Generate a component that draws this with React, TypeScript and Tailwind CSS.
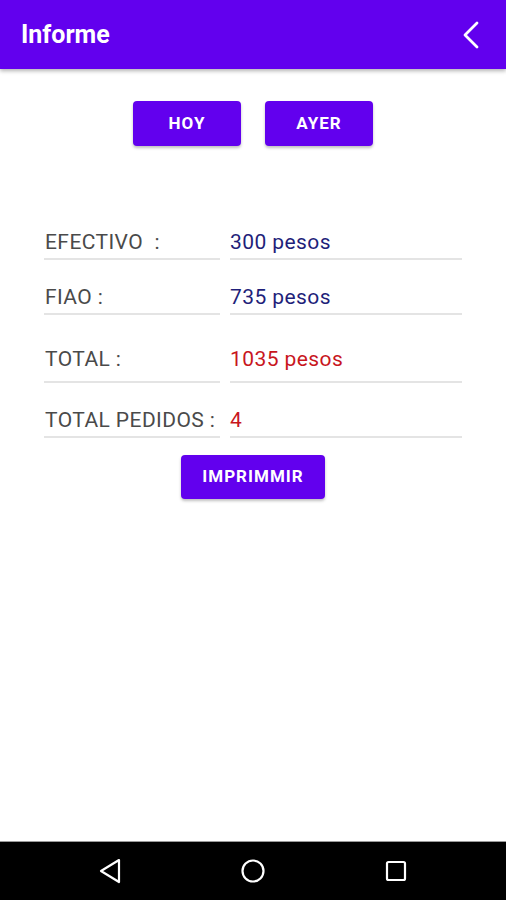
const rows = [
  { label: "EFECTIVO  :", value: "300 pesos", tone: "text-[#1f1f7a]", h: "h-[56px]", pb: "pb-[4px]" },
  { label: "FIAO :", value: "735 pesos", tone: "text-[#1f1f7a]", h: "h-[55px]", pb: "pb-[4px]" },
  { label: "TOTAL :", value: "1035 pesos", tone: "text-[#c8161d]", h: "h-[68px]", pb: "pb-[10px]" },
  { label: "TOTAL PEDIDOS :", value: "4", tone: "text-[#c8161d]", h: "h-[55px]", pb: "pb-[4px]" },
];

const PurpleButton = ({ label, className }: { label: string; className: string }) => (
  <button
    className={`rounded-[4px] bg-[#6200ee] text-white font-bold text-[17px] tracking-[0.06em] shadow-[0_2px_3px_rgba(0,0,0,0.25)] ${className}`}
  >
    {label}
  </button>
);

const App = () => {
  return (
    <div className="flex h-[900px] flex-col bg-white font-['Roboto',sans-serif]">
      <header className="relative z-10 flex h-[69px] items-center justify-between bg-[#6200ee] pl-[21px] pr-[27px] shadow-[0_2px_4px_rgba(0,0,0,0.3)]">
        <h1 className="text-[25px] font-bold text-white">Informe</h1>
        <svg width="16" height="28" viewBox="0 0 16 28" fill="none" stroke="white" strokeWidth="2.8" strokeLinecap="round" strokeLinejoin="round">
          <path d="M14 2 L2 14 L14 26" />
        </svg>
      </header>

      <main className="flex-1">
        <div className="mt-[32px] flex justify-center gap-[24px]">
          <PurpleButton label="HOY" className="h-[45px] w-[108px]" />
          <PurpleButton label="AYER" className="h-[45px] w-[108px]" />
        </div>

        <div className="mt-[58px] px-[44px]">
          {rows.map((row) => (
            <div key={row.label} className={`flex items-end gap-[10px] ${row.h}`}>
              <div className={`w-[176px] border-b-2 border-[#e4e4e4] pl-[1px] ${row.pb} text-[21px] leading-[24px] tracking-[0.02em] text-[#4a4a4a] whitespace-pre`}>
                {row.label}
              </div>
              <div className={`w-[232px] border-b-2 border-[#e4e4e4] ${row.pb} text-[21px] leading-[24px] tracking-[0.02em] ${row.tone}`}>
                {row.value}
              </div>
            </div>
          ))}
        </div>

        <div className="mt-[17px] flex justify-center">
          <PurpleButton label="IMPRIMMIR" className="h-[44px] w-[144px]" />
        </div>
      </main>

      <nav className="flex h-[59px] items-center justify-center gap-[95px] border-t border-[#9a9a9a] bg-black">
        <div className="flex w-[48px] justify-center">
          <svg width="24" height="26" viewBox="0 0 24 26" fill="none" stroke="white" strokeWidth="2.2" strokeLinejoin="round">
            <path d="M21 2 L3 13 L21 24 Z" />
          </svg>
        </div>
        <div className="flex w-[48px] justify-center">
          <svg width="26" height="26" viewBox="0 0 26 26" fill="none" stroke="white" strokeWidth="2.2">
            <circle cx="13" cy="13" r="10.5" />
          </svg>
        </div>
        <div className="flex w-[48px] justify-center">
          <svg width="24" height="24" viewBox="0 0 24 24" fill="none" stroke="white" strokeWidth="2.2">
            <rect x="3" y="3" width="18" height="18" rx="1.5" />
          </svg>
        </div>
      </nav>
    </div>
  );
};

export default App;
